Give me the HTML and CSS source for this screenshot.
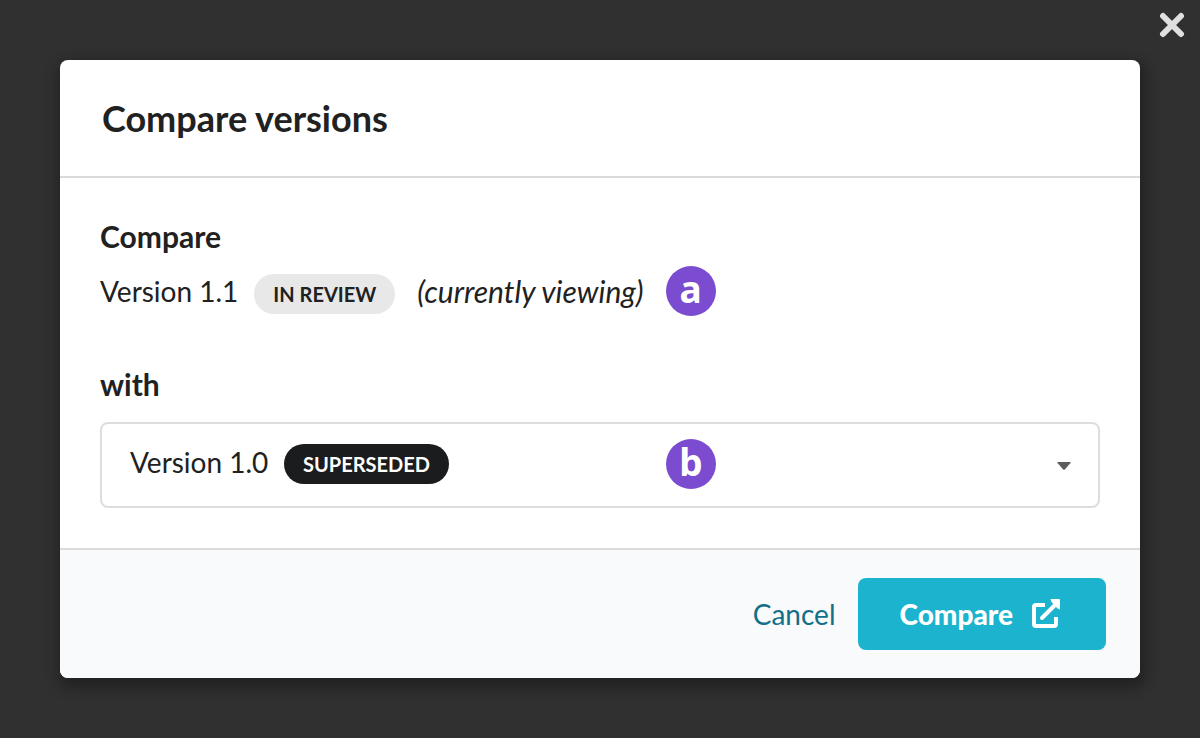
FILE: index.html
```html
<!doctype html>
<html lang="en">
<head>
    <meta charset="utf-8">
    <title>Compare versions</title>
    <link rel="stylesheet" href="styles.css">
</head>

<body>

<button type="button" class="close" aria-label="Close">
    <svg viewBox="0 0 26 26" width="26" height="26">
        <path d="M4 4L22 22M22 4L4 22" stroke="#e0e0e0" stroke-width="6" stroke-linecap="round"/>
    </svg>
</button>

<form class="modal">
    <header class="modal-header">
        <h1>Compare versions</h1>
    </header>

    <div class="modal-content">
        <h2>Compare</h2>
        <p class="version">
            <span>Version 1.1</span>
            <span class="label">IN REVIEW</span>
            <em>(currently viewing)</em>
            <span class="marker">a</span>
        </p>

        <h2><label for="with-version">with</label></h2>
        <div class="dropdown">
            <select id="with-version">
                <option>Version 1.0</option>
            </select>
            <span class="label label-black">SUPERSEDED</span>
            <span class="marker">b</span>
            <svg class="caret" viewBox="0 0 14 8" width="14" height="8">
                <path d="M1 0H13Q14.500 0 13.500 1L8 7.300Q7 8.300 6 7.300L.5 1Q-.5 0 1 0Z" fill="#5c5d5e"/>
            </svg>
        </div>
    </div>

    <footer class="modal-actions">
        <a href="#" class="cancel">Cancel</a>
        <button type="submit" class="compare">
            Compare
            <svg viewBox="0 0 30 30" width="30" height="30" fill="none" stroke="#fff" stroke-width="4">
                <path d="M14 6H5Q3 6 3 8V25Q3 27 5 27H23Q25 27 25 25V18" stroke-linejoin="round"/>
                <path d="M11 19L25 5" stroke-linecap="round"/>
                <path d="M19.500 0H28Q29 0 29 1V10.500L26.500 9.500L20.500 3Z" fill="#fff" stroke="none"/>
            </svg>
        </button>
    </footer>
</form>

</body>
</html>
```

FILE: styles.css
```css
* {
    box-sizing: border-box;
}

body {
    margin: 0;
    padding: 60px;
    background: #303030;
    color: #212121;
    font-family: Lato, "Liberation Sans", sans-serif;
    font-size: 28px;
    line-height: 40px;
}

h1, h2, p {
    margin: 0;
}

h1 {
    font-size: 36px;
    line-height: 44px;
}

h2 {
    font-size: 30px;
    line-height: 40px;
}

.close {
    position: absolute;
    top: 12px;
    right: 15px;
    padding: 0;
    border: none;
    background: none;
    cursor: pointer;
}

.close svg {
    display: block;
}

.modal {
    background: #fff;
    border-radius: 8px;
    box-shadow: 2px 6px 14px 4px rgba(0, 0, 0, .3);
    overflow: hidden;
}

.modal-header {
    padding: 36px 42px;
    border-bottom: 2px solid #d9dadb;
}

.modal-content {
    padding: 38px 40px 40px;
}

.version {
    display: flex;
    align-items: center;
    margin: 12px 0 50px;
}

.version em {
    margin: 0 22px;
    font-size: 30px;
}

.label {
    padding: 0 19px;
    border-radius: 20px;
    background: #e8e8e8;
    font-size: 20px;
    font-weight: bold;
}

.version .label {
    margin: 6px 0 0 16px;
}

.label-black {
    background: #1b1c1d;
    color: #fff;
}

.marker {
    width: 50px;
    height: 50px;
    margin: -5px 0;
    border-radius: 50%;
    background: #7b4ccf;
    color: #fff;
    font: bold 37px/46px "Noto Sans", "Open Sans", sans-serif;
    text-align: center;
}

.dropdown {
    position: relative;
    margin-top: 18px;
}

.dropdown select {
    display: block;
    width: 100%;
    height: 86px;
    padding: 0 28px 6px;
    border: 2px solid #dcddde;
    border-radius: 8px;
    background: #fff;
    color: inherit;
    font: inherit;
    appearance: none;
}

/* drawn over the select */
.dropdown .label,
.dropdown .marker,
.dropdown .caret {
    position: absolute;
    pointer-events: none;
}

.dropdown .label {
    top: 22px;
    left: 184px;
}

.dropdown .marker {
    top: 22px;
    left: 566px;
}

.dropdown .caret {
    top: 40px;
    right: 29px;
}

.modal-actions {
    display: flex;
    align-items: center;
    justify-content: flex-end;
    gap: 22px;
    padding: 28px 34px;
    border-top: 2px solid #d9dadb;
    background: #f9fafb;
}

.cancel {
    color: #126f8a;
    text-decoration: none;
}

.compare {
    display: flex;
    align-items: center;
    gap: 18px;
    height: 72px;
    padding: 0 45px 0 42px;
    border: none;
    border-radius: 8px;
    background: #1bb3cd;
    color: #fff;
    font: inherit;
    font-weight: 900;
    cursor: pointer;
}
```
